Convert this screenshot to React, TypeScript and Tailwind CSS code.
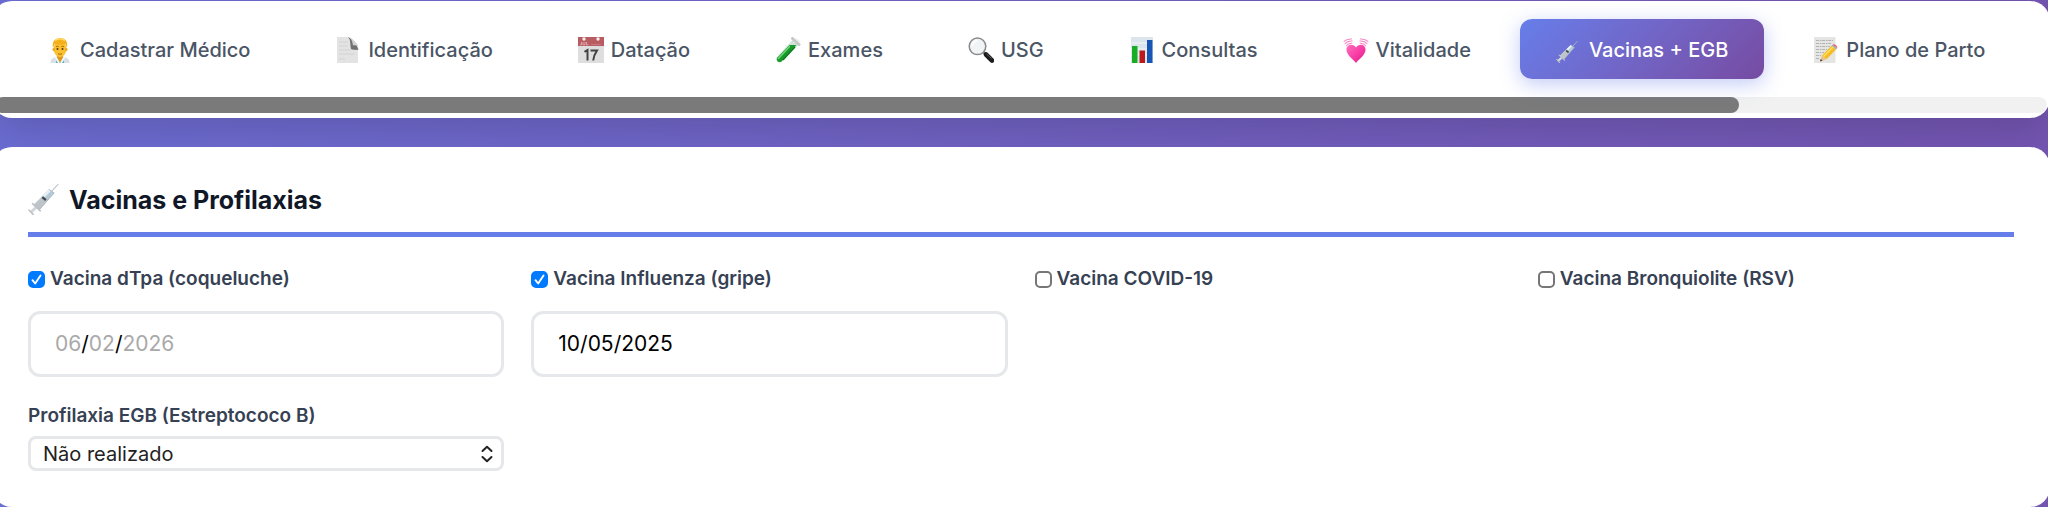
import { useState, type ReactNode } from "react";

type IconProps = { className?: string; viewBox?: string };

function Icon({ className = "size-[26px]", viewBox = "0 0 26 26", children }: IconProps & { children: ReactNode }) {
  return (
    <svg viewBox={viewBox} className={`${className} shrink-0`} aria-hidden="true">
      {children}
    </svg>
  );
}

function DoctorIcon() {
  return (
    <Icon>
      <path d="M3.5 26c0-4 2.5-5.6 6-6.2h7c3.5.6 6 2.2 6 6.2z" fill="#d9e0e6" />
      <path d="M10 19h6l1 3-4 4-4-4z" fill="#e0981c" />
      <path d="M10 21l3 5 3-5 1 5H9z" fill="#4fa9bd" />
      <path d="M8.5 19.700L12 26M17.5 19.700L14 26" stroke="#f5f8fa" strokeWidth="1.8" />
      <ellipse cx="13" cy="12" rx="6.300" ry="8.300" fill="#fbc02d" />
      <ellipse cx="6.700" cy="12.5" rx="1.200" ry="1.8" fill="#eba51f" />
      <ellipse cx="19.300" cy="12.5" rx="1.200" ry="1.8" fill="#eba51f" />
      <path d="M6 11C4.800 4.500 8 1 13 1s8.300 3.200 7 10l-1.500-3.800c-3 .6-8 .5-10.800-.2z" fill="#f5b01c" />
      <path d="M8 3.500c3-2 7-2 10 0" stroke="#ffe066" strokeWidth="1.200" fill="none" />
      <circle cx="10.500" cy="12" r="1" fill="#59350e" />
      <circle cx="15.500" cy="12" r="1" fill="#59350e" />
      <path d="M9 9.800q1.500-1 2.700-.2M14.300 9.600q1.500-.8 2.700.2M11 16.800q2 1 4 0" stroke="#8a5410" strokeWidth=".8" fill="none" />
    </Icon>
  );
}

function PageIcon() {
  return (
    <Icon>
      <path d="M2 0h12l9 13v13H2z" fill="#e3e3e3" />
      <path d="M4 5h9M4 9h9M4 13h12M4 17h16M4 22h6" stroke="#d0d0d0" strokeWidth=".9" />
      <path d="M13 0c3 3 2 8 3 12 3 1.500 5 .5 7.500 1C22 7 18 2 13 0z" fill="#707070" />
      <path d="M14 0c4 2 8 6 9.500 9.500-2-1.200-4-1.500-5.700-1.200C18 6 17 2.500 14 0z" fill="#d3d3d3" />
    </Icon>
  );
}

function CalendarIcon() {
  return (
    <Icon>
      <path d="M0 9h26v17H0z" fill="#dedede" />
      <path d="M0 0h26v9H0z" fill="#b95c61" />
      <circle cx="6" cy="2" r="1.700" fill="#f7eded" />
      <circle cx="20" cy="2" r="1.700" fill="#f7eded" />
      <path d="M2 7.800h1.500V5M5 5v2.800h2V5M8.500 5v2.800h2" stroke="#e5b5b7" strokeWidth=".8" fill="none" />
      <path d="M13 7.500h10" stroke="#c77b80" strokeWidth="1" />
      <path d="M6.500 14.800L9.500 13v10.500M12.500 13.500h6.500c-2 3-3.500 6-3.800 10" stroke="#424242" strokeWidth="2" fill="none" />
    </Icon>
  );
}

function TubeIcon() {
  return (
    <Icon>
      <path d="M18 2.500l5.500 5L6.500 25c-3 2-6.500-.5-5-4.500z" fill="#d3e2d8" />
      <path d="M14.500 8h7L6.500 24.500c-2.800 1.500-5.500-.5-4.300-3.800z" fill="#169b2a" />
      <path d="M14.500 9.500L3.500 21.500" stroke="#71d67b" strokeWidth="1.500" strokeLinecap="round" />
      <path d="M20 10L8 23" stroke="#087719" strokeWidth="1.200" />
      <path d="M17.500 1.500l6.500 6" stroke="#c4c9c8" strokeWidth="3" strokeLinecap="round" />
      <path d="M20 1.500l4.500 3" stroke="#e8ecea" strokeWidth="1.500" strokeLinecap="round" />
    </Icon>
  );
}

function MagnifierIcon() {
  return (
    <Icon>
      <path d="M15.500 15l3.500 3.500" stroke="#777" strokeWidth="2.500" />
      <path d="M18 17.500l6 6" stroke="#1d1d1f" strokeWidth="4.600" strokeLinecap="round" />
      <path d="M18.500 16.800l5 4.700" stroke="#66666b" strokeWidth=".9" />
      <circle cx="9.500" cy="9.300" r="8.300" fill="#f1f4f6" stroke="#8b8b8e" strokeWidth="1.500" />
      <path d="M4.300 9A5.500 5.500 0 0 1 9.500 3.800" stroke="#fff" strokeWidth="1.800" fill="none" />
    </Icon>
  );
}

function ChartIcon() {
  return (
    <Icon>
      <path d="M2 0h22v26H2z" fill="#dde5ec" />
      <path d="M2 6h22M2 12h22M2 18h22" stroke="#f3f6f8" />
      <path d="M3 9h5.500v17H3z" fill="#19ac25" />
      <path d="M10.500 13.500H16V26h-5.500z" fill="#b91b1b" />
      <path d="M18 3h5.500v23H18z" fill="#1856b5" />
    </Icon>
  );
}

function HeartIcon() {
  return (
    <Icon>
      <defs>
        <linearGradient id="heart-fill" x1="0" y1="0" x2="1" y2="1">
          <stop offset="0" stopColor="#ff70bd" />
          <stop offset=".5" stopColor="#f83fa7" />
          <stop offset="1" stopColor="#df1888" />
        </linearGradient>
      </defs>
      <path d="M13 26C9.500 21.500 3.500 18 3.500 12.500c0-5.500 7-6.500 9.500-2 2.500-4.500 9.500-3.500 9.500 2C22.500 18 16.500 21.500 13 26z" fill="url(#heart-fill)" />
      <path d="M3 9.300Q5 6 9.300 6.200M1.800 7Q4.500 3.600 9.500 4M.7 4.700Q4 1.500 9 2M23 9.300Q21 6 16.700 6.200M24.200 7Q21.500 3.600 16.500 4M25.300 4.700Q22 1.500 17 2" stroke="#f58ac7" strokeWidth="1.100" fill="none" />
    </Icon>
  );
}

function SyringeIcon({ className, viewBox }: IconProps) {
  return (
    <Icon className={className} viewBox={viewBox}>
      <path d="M20 6l5.500-6" stroke="#b9c2c8" strokeWidth=".9" />
      <path d="M17.500 4.500l4.500 3L9.500 21.500l-4.700-4z" fill="#b4cad8" />
      <path d="M17.500 4.500l1.800 1.200L6.500 19l-1.700-1.500z" fill="#e6f0f5" />
      <path d="M12.500 10l4 3.300-7 8.200-4.700-4z" fill="#bfc4c8" />
      <path d="M12 11l3 2.500" stroke="#404950" strokeWidth="2" />
      <path d="M17.500 4.500l4.500 3L9.500 21.500" stroke="#9dabb4" strokeWidth=".6" fill="none" />
      <path d="M7 19.500l-4.500 4" stroke="#d2d6d9" strokeWidth="2.500" />
      <path d="M3.800 16.500l6.500 6M.8 21.800l3.500 3.700" stroke="#bcc1c5" strokeWidth="1.300" strokeLinecap="round" />
    </Icon>
  );
}

function MemoIcon() {
  return (
    <Icon>
      <path d="M1 0h21.500v26H1z" fill="#e5e5e3" />
      <path d="M3 3.500h17M3 6.500h15M3 9.500h14M3 12.500h11M3 15.500h8M3 18.500h5M3 21.500h4" stroke="#a6a6a4" strokeWidth=".8" strokeDasharray="3 .8 1.6 .7" />
      <path d="M7 24.500l2-6 4.500 3.700z" fill="#e8c28a" />
      <path d="M7 24.500l.8-2.400 1.700 1.400z" fill="#333" />
      <path d="M9 18.500L18.500 8.800l4.500 3.700-9.500 9.700z" fill="#f6bd22" />
      <path d="M10.500 19.600l9.500-9.700" stroke="#ffe06b" strokeWidth="1.400" />
      <path d="M18.500 8.800l1.200-1.200 4.500 3.700-1.200 1.200z" fill="#a9b0b4" />
      <path d="M19.700 7.600c1.700-1.400 5.300 1.500 4.500 3.700z" fill="#e5646b" />
    </Icon>
  );
}

const tabs = [
  { label: "Cadastrar Médico", icon: <DoctorIcon /> },
  { label: "Identificação", icon: <PageIcon /> },
  { label: "Datação", icon: <CalendarIcon /> },
  { label: "Exames", icon: <TubeIcon /> },
  { label: "USG", icon: <MagnifierIcon /> },
  { label: "Consultas", icon: <ChartIcon /> },
  { label: "Vitalidade", icon: <HeartIcon /> },
  { label: "Vacinas + EGB", icon: <SyringeIcon viewBox="0 -5 31 31" /> },
  { label: "Plano de Parto", icon: <MemoIcon /> },
];

type DateFieldProps = { label: string; value?: string[]; hint?: string[] };

function DateField({ label, value = ["", "", ""], hint = ["", "", ""] }: DateFieldProps) {
  const parts = ["dia", "mês", "ano"];
  return (
    <div role="group" aria-label={`Data: ${label}`} className="flex h-[66px] items-center rounded-xl border-3 border-gray-200 bg-white px-6 text-[21px] text-black">
      {parts.map((part, i) => (
        <span key={part} className="flex items-center">
          {i > 0 && <span>/</span>}
          <input
            type="text"
            inputMode="numeric"
            aria-label={part}
            defaultValue={value[i]}
            placeholder={hint[i]}
            className="field-sizing-content bg-transparent p-0 outline-none placeholder:text-[#a9a9a9]"
          />
        </span>
      ))}
    </div>
  );
}

type VaccineProps = { label: string; checked?: boolean; children?: ReactNode };

function Vaccine({ label, checked = false, children }: VaccineProps) {
  return (
    <div className="flex min-w-0 flex-col gap-[18px]">
      <label className="flex h-7 items-center gap-[5px] text-[19px] font-semibold text-gray-700">
        <span className="grid shrink-0 place-items-center">
          <input
            type="checkbox"
            defaultChecked={checked}
            className="peer col-start-1 row-start-1 size-[17px] appearance-none rounded-[5px] border-2 border-[#767676] bg-white checked:border-[#007aff] checked:bg-[#007aff]"
          />
          <svg viewBox="0 0 17 17" className="pointer-events-none col-start-1 row-start-1 hidden size-[17px] peer-checked:block" aria-hidden="true">
            <path d="M4.500 9.200l2.700 3.300 5.300-8" fill="none" stroke="#fff" strokeWidth="1.900" strokeLinecap="round" strokeLinejoin="round" />
          </svg>
        </span>
        {label}
      </label>
      {children}
    </div>
  );
}

export default function App() {
  const [active, setActive] = useState("Vacinas + EGB");
  return (
    <div className="min-h-screen overflow-hidden bg-linear-to-r from-[#6c6dd3] to-[#7455b2] pt-px font-['Inter',sans-serif]">
      <nav className="-mr-0.5 -ml-2 rounded-[20px] bg-white pt-[18px] pb-[5px] shadow-[0_13px_40px_rgba(0,0,0,0.15)]">
        <div className="flex gap-[13px] pl-[19px]">
          {tabs.map(({ label, icon }) => (
            <button
              key={label}
              type="button"
              onClick={() => setActive(label)}
              className={
                label === active
                  ? "flex h-15 shrink-0 items-center gap-[7px] rounded-xl bg-linear-135 from-[#667eea] to-[#764ba2] px-9 pt-0.5 text-xl font-medium whitespace-nowrap text-white shadow-[0_5px_20px_rgba(102,126,234,0.4)]"
                  : "flex h-15 shrink-0 items-center gap-[7px] rounded-xl px-9 pt-0.5 text-xl font-medium whitespace-nowrap text-gray-600"
              }
            >
              {icon}
              {label}
            </button>
          ))}
        </div>
        <div className="mt-[18px] mr-[3px] ml-[3px] h-4 rounded-full bg-[#f1f1f1]">
          <div className="h-full w-[85%] rounded-full bg-[#7a7a7a]" />
        </div>
      </nav>

      <main className="relative mt-[29px] -mr-0.5 -ml-2 rounded-[20px] bg-white px-9 pt-[37px] pb-9">
        <h2 className="flex h-[53px] items-start gap-[10px] border-b-5 border-[#667eea] text-[25px] leading-8 font-bold text-gray-900">
          <SyringeIcon className="size-[31px]" />
          Vacinas e Profilaxias
        </h2>
        <div className="mt-7 grid grid-cols-4 gap-x-[27px] gap-y-[26px]">
          <Vaccine label="Vacina dTpa (coqueluche)" checked>
            <DateField label="Vacina dTpa" hint={["06", "02", "2026"]} />
          </Vaccine>
          <Vaccine label="Vacina Influenza (gripe)" checked>
            <DateField label="Vacina Influenza" value={["10", "05", "2025"]} />
          </Vaccine>
          <Vaccine label="Vacina COVID-19" />
          <Vaccine label="Vacina Bronquiolite (RSV)" />
          <div className="flex min-w-0 flex-col gap-[7px]">
            <label htmlFor="egb" className="text-[19px] leading-[26px] font-semibold text-gray-700">
              Profilaxia EGB (Estreptococo B)
            </label>
            <div className="relative">
              <select id="egb" defaultValue="Não realizado" className="block h-[35px] w-full appearance-none rounded-lg border-3 border-gray-200 bg-white pr-8 pl-3 text-xl leading-7 text-[#222]">
                <option>Não realizado</option>
                <option>Negativo</option>
                <option>Positivo</option>
              </select>
              <svg viewBox="0 0 12 18" className="pointer-events-none absolute top-[9px] right-[11px] h-[18px] w-3" aria-hidden="true">
                <path d="M1.500 6L6 1.800 10.500 6M1.500 12L6 16.200 10.500 12" fill="none" stroke="#222" strokeWidth="2" strokeLinecap="round" strokeLinejoin="round" />
              </svg>
            </div>
          </div>
        </div>
      </main>
    </div>
  );
}
